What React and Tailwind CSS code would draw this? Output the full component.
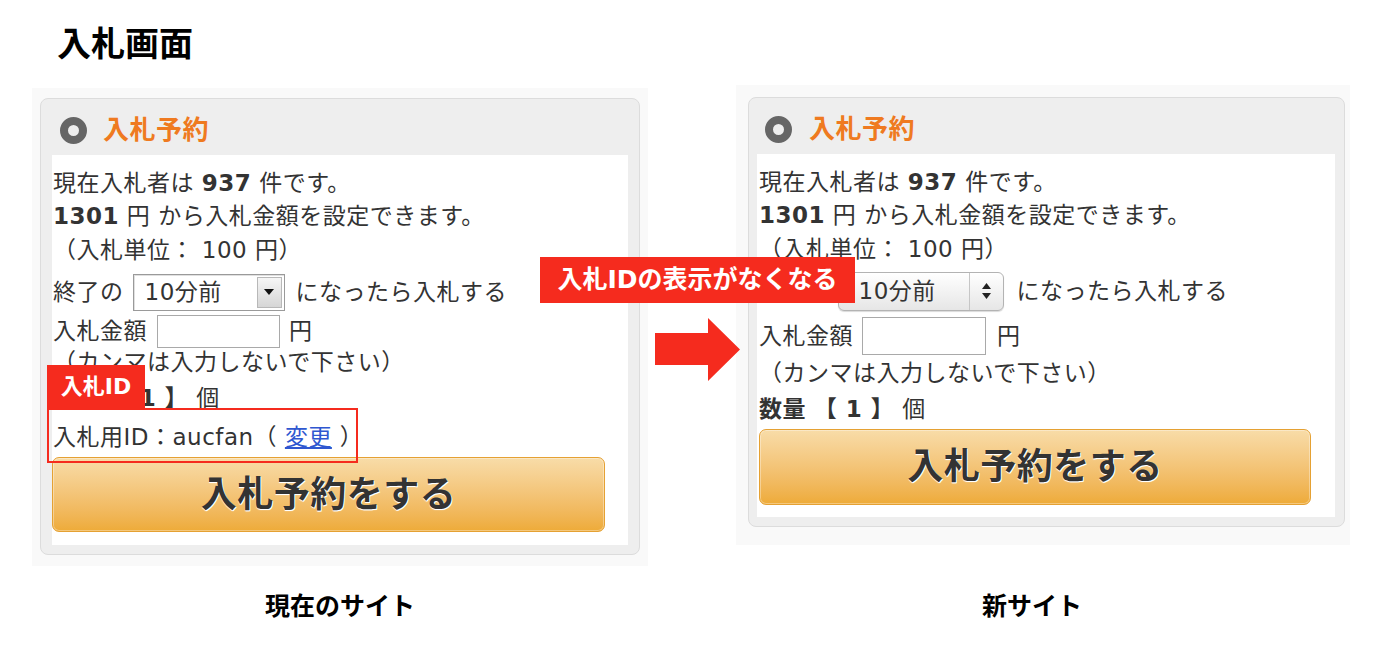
import React from 'react';

const RED = 'bg-[#f52b1e]';

const Header = ({ circleMl, gap }) => (
  <div className="flex h-[56px] items-center pt-[6px]">
    <div className={`h-[27px] w-[27px] rounded-full border-[8px] border-[#666666] bg-[#eeeeee] ${circleMl}`} />
    <span className={`text-[26px] font-bold text-[#ef7a20] ${gap}`}>入札予約</span>
  </div>
);

const WinSelect = () => (
  <div className="flex h-[37px] w-[152px] items-stretch border border-[#9a9a9a] bg-white shadow-[inset_1px_1px_0_#e0e0e0]">
    <span className="flex flex-1 items-center pl-[11px]">10分前</span>
    <div className="m-[2px] flex w-[25px] items-center justify-center border border-[#b8b8b8] bg-linear-to-b from-[#f6f6f6] to-[#d6d6d6]">
      <svg width="10" height="6" viewBox="0 0 10 6"><polygon points="0,0 10,0 5,6" fill="#111" /></svg>
    </div>
  </div>
);

const MacSelect = () => (
  <div className="flex h-[39px] w-[166px] items-stretch rounded-[6px] border border-[#b3b3b3] bg-linear-to-b from-white to-[#e6e6e6] shadow-[0_1px_1px_rgba(0,0,0,0.15)]">
    <span className="flex flex-1 items-center pl-[20px]">10分前</span>
    <div className="flex w-[34px] items-center justify-center border-l border-[#c6c6c6]">
      <svg width="9" height="16" viewBox="0 0 9 16">
        <polygon points="4.5,0 9,6 0,6" fill="#222" />
        <polygon points="0,10 9,10 4.5,16" fill="#222" />
      </svg>
    </div>
  </div>
);

const BidButton = ({ className }) => (
  <div className={`flex items-center justify-center rounded-[7px] border border-[#e5a133] bg-linear-to-b from-[#f8dca8] to-[#eeab38] shadow-[inset_0_0_0_1px_rgba(255,255,255,0.35)] text-[36px] font-bold tracking-[0.5px] text-[#333333] [text-shadow:1px_1px_0_#fff,0_1px_1px_#fff] ${className}`}>
    入札予約をする
  </div>
);

export default function App() {
  return (
    <div className="relative h-[646px] w-[1386px] overflow-hidden bg-white font-['DejaVu_Sans','Noto_Sans_CJK_JP',sans-serif] text-[23px] tracking-[0.5px] text-[#333333]">
      <h1 className="box-content h-[40px] pl-[57px] pt-[24px] text-[34px] font-bold leading-[40px] tracking-normal text-black">入札画面</h1>

      <div className="flex items-start">
        {/* 現在のサイト */}
        <div className="ml-[32px] mt-[24px] flex w-[616px] flex-col">
          <div className="h-[478px] bg-[#f9f9f9] px-[8px] pt-[10px]">
            <div className="rounded-[8px] border border-[#dcdcdc] bg-[#eeeeee] pb-[9px]">
              <Header circleMl="ml-[19px]" gap="ml-[16px]" />
              <div className="mx-[11px] flex flex-col bg-white pb-[13px] pl-[1px] pt-[11px]">
                <div className="flex h-[34px] items-center">現在入札者は&nbsp;<b>937</b>&nbsp;件です。</div>
                <div className="flex h-[33px] items-center"><b>1301</b>&nbsp;円&nbsp;から入札金額を設定できます。</div>
                <div className="flex h-[34px] items-center">（入札単位：&nbsp;100&nbsp;円）</div>
                <div className="flex h-[50px] items-center">
                  <span>終了の</span>
                  <div className="ml-[9px] mr-[11px]"><WinSelect /></div>
                  <span>になったら入札する</span>
                </div>
                <div className="flex h-[28px] items-center">
                  <span>入札金額</span>
                  <div className="ml-[10px] mr-[9px] h-[33px] w-[123px] border border-[#a9a9a9] bg-white" />
                  <span>円</span>
                </div>
                <div className="flex h-[34px] items-center">（カンマは入力しないで下さい）</div>
                <div className="flex h-[38px] items-center"><b>数量</b>&nbsp;<b>【&nbsp;1&nbsp;】</b>&nbsp;個</div>
                <div className="flex h-[40px] items-center">
                  入札用ID：aucfan（&nbsp;<span className="text-[#2f57d0] underline">変更</span>&nbsp;）
                </div>
                <BidButton className="-ml-[1px] h-[75px] w-[553px]" />
              </div>
            </div>
          </div>
          <div className="mt-[26px] h-[30px] text-center text-[25px] font-bold leading-[30px] tracking-normal text-black">現在のサイト</div>
        </div>

        {/* 新サイト */}
        <div className="ml-[88px] mt-[21px] flex w-[614px] flex-col">
          <div className="h-[460px] bg-[#f9f9f9] pl-[12px] pt-[12px]">
            <div className="w-[597px] rounded-[8px] border border-[#dcdcdc] bg-[#eeeeee] pb-[9px]">
              <Header circleMl="ml-[16px]" gap="ml-[17px]" />
              <div className="ml-[8px] mr-[9px] flex flex-col bg-white pb-[12px] pl-[2px] pt-[11px]">
                <div className="flex h-[34px] items-center">現在入札者は&nbsp;<b>937</b>&nbsp;件です。</div>
                <div className="flex h-[33px] items-center"><b>1301</b>&nbsp;円&nbsp;から入札金額を設定できます。</div>
                <div className="flex h-[34px] items-center">（入札単位：&nbsp;100&nbsp;円）</div>
                <div className="flex h-[50px] items-center">
                  <span>終了の</span>
                  <div className="ml-[8px] mr-[13px]"><MacSelect /></div>
                  <span>になったら入札する</span>
                </div>
                <div className="flex h-[40px] items-center">
                  <span>入札金額</span>
                  <div className="ml-[9px] mr-[11px] h-[38px] w-[124px] border border-[#a9a9a9] bg-white" />
                  <span>円</span>
                </div>
                <div className="flex h-[34px] items-center">（カンマは入力しないで下さい）</div>
                <div className="flex h-[38px] items-center"><b>数量</b>&nbsp;<b>【&nbsp;1&nbsp;】</b>&nbsp;個</div>
                <BidButton className="mt-[1px] h-[76px] w-[552px]" />
              </div>
            </div>
          </div>
          <div className="mt-[47px] h-[30px] pr-[22px] text-center text-[25px] font-bold leading-[30px] tracking-normal text-black">新サイト</div>
        </div>
      </div>

      {/* annotations */}
      <div className={`absolute left-[47px] top-[365px] flex h-[43px] w-[98px] items-center justify-center ${RED} text-[22px] font-bold tracking-normal text-white`}>入札ID</div>
      <div className="absolute left-[47px] top-[408px] h-[55px] w-[311px] border-2 border-[#f52b1e]" />
      <div className={`absolute left-[540px] top-[257px] flex h-[46px] w-[315px] items-center justify-center ${RED} text-[25px] font-bold tracking-normal text-white`}>入札IDの表示がなくなる</div>
      <svg className="absolute left-[655px] top-[318px]" width="86" height="64" viewBox="0 0 86 64">
        <polygon points="0,15 53,15 53,0 85,31.5 53,63 53,47 0,47" fill="#f52b1e" />
      </svg>
    </div>
  );
}
